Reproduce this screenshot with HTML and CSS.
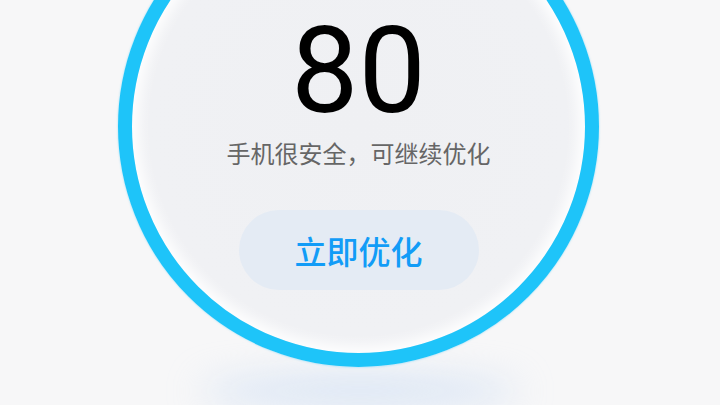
FILE: index.html
```html
<!DOCTYPE html>
<html lang="zh">
<head>
<meta charset="utf-8">
<link rel="stylesheet" href="styles.css">
</head>
<body>
<div class="stage">
  <div class="dial">
    <div class="score">80</div>
    <div class="status">手机很安全，可继续优化</div>
    <div class="btn">立即优化</div>
  </div>
  <div class="floor-shadow"></div>
</div>
</body>
</html>
```
FILE: styles.css
```css
html, body {
  margin: 0;
  padding: 0;
}
body {
  width: 720px;
  height: 405px;
  overflow: hidden;
  background: #f7f7f8;
  font-family: "Noto Sans CJK SC", "Noto Sans", sans-serif;
}
.stage {
  position: relative;
  width: 720px;
  height: 405px;
  overflow: hidden;
  background: #f7f7f8;
}
.dial {
  position: relative;
  z-index: 1;
  box-sizing: border-box;
  width: 481px;
  height: 481px;
  margin: -114px 0 0 118px;
  border-radius: 50%;
  border: 14px solid #1ec4f9;
  background: radial-gradient(circle at 50% 50%, #eff0f3 0%, #f0f1f4 65%, #f6f7f9 88%, #ffffff 100%);
  box-shadow: inset 0 0 14px 6px rgba(255,255,255,0.95), 0 0 2px rgba(30,190,250,0.5);
  display: flex;
  flex-direction: column;
  align-items: center;
  padding-top: 111px;
}
.score {
  font-family: Roboto, "Noto Sans", sans-serif;
  font-size: 120px;
  line-height: 120px;
  color: #000;
}
.status {
  margin-top: 6px;
  font-size: 24px;
  line-height: 32px;
  color: #666666;
}
.btn {
  margin-top: 41px;
  width: 240px;
  height: 80px;
  border-radius: 40px;
  background: #e4ebf4;
  color: #129cf7;
  font-size: 32px;
  font-weight: 500;
  display: flex;
  align-items: center;
  justify-content: center;
}
.floor-shadow {
  position: absolute;
  left: 200px;
  top: 376px;
  width: 320px;
  height: 30px;
  border-radius: 50%;
  background: rgba(196, 216, 242, 0.65);
  filter: blur(18px);
}
```
